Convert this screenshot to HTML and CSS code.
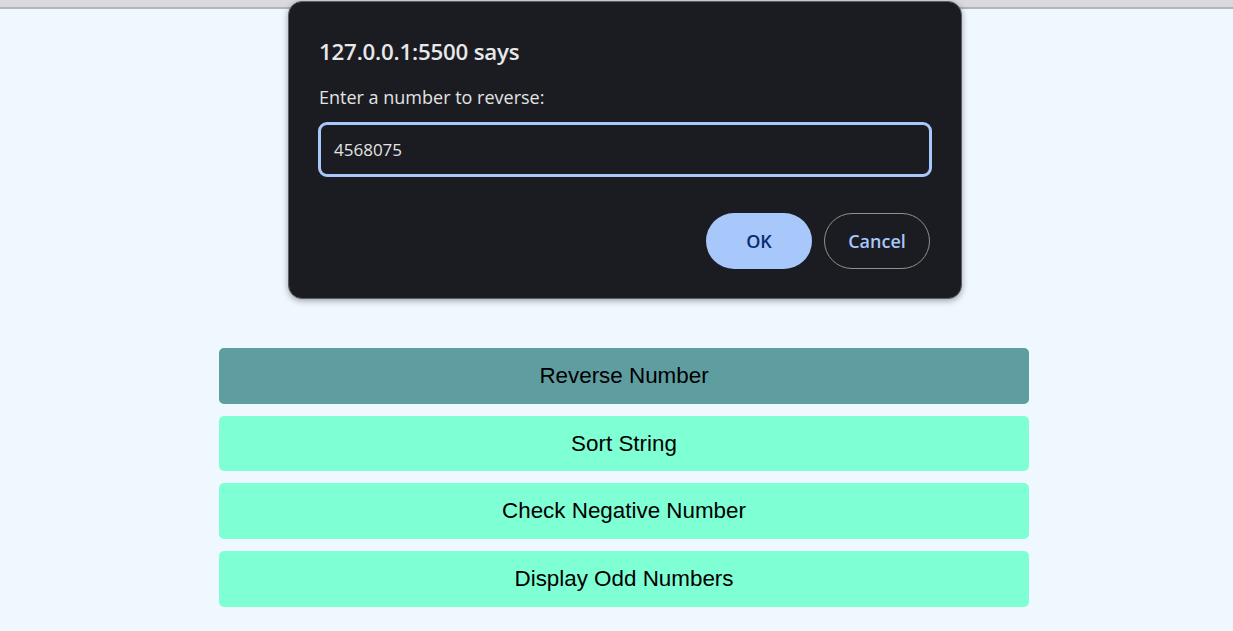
FILE: index.html
```html
<!DOCTYPE html>
<html lang="en">
<head>
<meta charset="utf-8">
<title>Number Tools</title>
<link rel="stylesheet" href="styles.css">
</head>
<body>
  <div class="topbar"></div>
  <main class="page">
    <div class="actions">
      <button class="action active">Reverse Number</button>
      <button class="action">Sort String</button>
      <button class="action">Check Negative Number</button>
      <button class="action">Display Odd Numbers</button>
    </div>
  </main>

  <div class="dialog" role="dialog">
    <div class="dialog-title">127.0.0.1:5500 says</div>
    <div class="dialog-label">Enter a number to reverse:</div>
    <div class="dialog-input">4568075</div>
    <div class="dialog-buttons">
      <button class="btn btn-ok">OK</button>
      <button class="btn btn-cancel">Cancel</button>
    </div>
  </div>
</body>
</html>
```

FILE: styles.css
```css
html, body {
  margin: 0;
  padding: 0;
}

body {
  background: #f0f8ff;
  font-family: "Liberation Sans", Arial, sans-serif;
  height: 631px;
  overflow: hidden;
  position: relative;
}

.topbar {
  height: 7px;
  background: #dadade;
  border-bottom: 2px solid #b3b3b8;
}

.page {
  padding-top: 339px;
  padding-left: 219px;
}

.actions {
  width: 810px;
  display: flex;
  flex-direction: column;
  gap: 12px;
}

.action {
  display: block;
  width: 100%;
  border: none;
  border-radius: 5px;
  background: #7fffd4;
  color: #000;
  font-family: "Liberation Sans", Arial, sans-serif;
  font-size: 22.4px;
  line-height: 25.7px;
  padding: 15px 0;
  text-align: center;
  cursor: pointer;
}

.action.active {
  background: #5f9ea0;
}

.dialog {
  position: absolute;
  top: 1px;
  left: 288px;
  width: 612px;
  padding: 36px 30px 29px 30px;
  background: #1b1c21;
  border: 1px solid #5b5e66;
  border-radius: 14px;
  box-shadow: 0 2px 6px rgba(0, 0, 0, 0.35);
  font-family: "Open Sans", "Noto Sans", sans-serif;
  color: #e3e3e3;
}

.dialog-title {
  font-size: 22.3px;
  font-weight: 600;
  line-height: 28px;
  color: #e8e8ea;
  letter-spacing: -0.2px;
}

.dialog-label {
  margin-top: 19px;
  font-size: 18px;
  line-height: 24px;
  color: #e3e3e3;
}

.dialog-input {
  margin: 13px -1px 0 -1px;
  box-sizing: border-box;
  height: 55px;
  border: 3px solid #a8c7fa;
  border-radius: 9px;
  padding: 0 13px;
  display: flex;
  align-items: center;
  font-size: 17px;
  color: #e3e3e3;
}

.dialog-buttons {
  margin-top: 36px;
  display: flex;
  justify-content: flex-end;
  gap: 12px;
  padding-right: 1px;
}

.btn {
  width: 106px;
  height: 56px;
  border-radius: 28px;
  font-family: "Open Sans", "Noto Sans", sans-serif;
  font-size: 18px;
  font-weight: 600;
  cursor: pointer;
}

.btn-ok {
  background: #a8c7fa;
  border: none;
  color: #062e6f;
}

.btn-cancel {
  background: transparent;
  border: 1px solid #8e918f;
  color: #a8c7fa;
}
```
